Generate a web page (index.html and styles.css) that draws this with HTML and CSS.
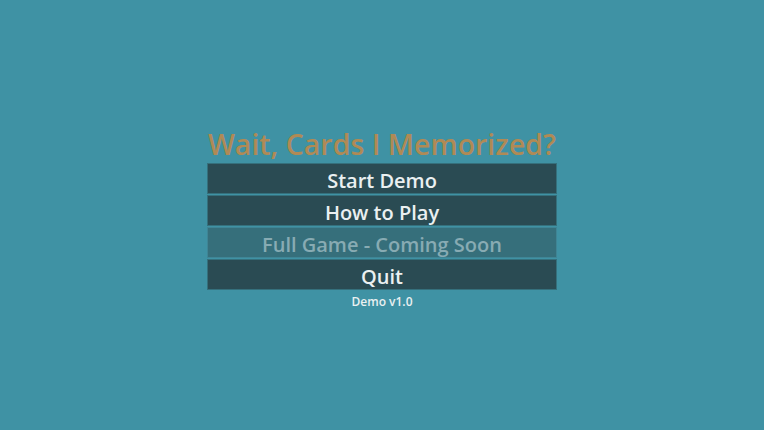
FILE: index.html
```html
<!DOCTYPE html>
<html>
<head>
<meta charset="utf-8">
<link rel="stylesheet" href="styles.css">
</head>
<body>
<div class="screen">
  <div class="menu">
    <h1 class="title">Wait, Cards I Memorized?</h1>
    <div class="buttons">
      <div class="btn">Start Demo</div>
      <div class="btn">How to Play</div>
      <div class="btn disabled">Full Game - Coming Soon</div>
      <div class="btn">Quit</div>
    </div>
    <div class="version">Demo v1.0</div>
  </div>
</div>
</body>
</html>
```
FILE: styles.css
```css
html, body {
  margin: 0;
  padding: 0;
  width: 764px;
  height: 430px;
  overflow: hidden;
  background: #3f92a4;
}
.screen {
  width: 764px;
  height: 430px;
  display: flex;
  align-items: center;
  justify-content: center;
  font-family: "Open Sans", "Noto Sans", sans-serif;
  font-weight: 600;
}
.menu {
  width: 350px;
  display: flex;
  flex-direction: column;
  align-items: stretch;
  margin-top: 6px;
}
.title {
  margin: 0 -20px;
  white-space: nowrap;
  text-align: center;
  font-size: 28.5px;
  font-weight: 600;
  line-height: 37px;
  color: #b08a55;
}
.buttons {
  display: flex;
  flex-direction: column;
  gap: 1px;
}
.btn {
  height: 31px;
  box-sizing: border-box;
  padding-top: 3px;
  background: #2a4b53;
  border: 1px solid #35707c;
  color: #eaf0f1;
  font-size: 20px;
  font-weight: 600;
  line-height: 27px;
  text-align: center;
}
.btn.disabled {
  background: #366f7b;
  border-color: #3f8595;
  color: #88abb3;
}
.version {
  margin-top: 3px;
  text-align: center;
  font-size: 12px;
  line-height: 18px;
  color: #eaf0f1;
}
```
